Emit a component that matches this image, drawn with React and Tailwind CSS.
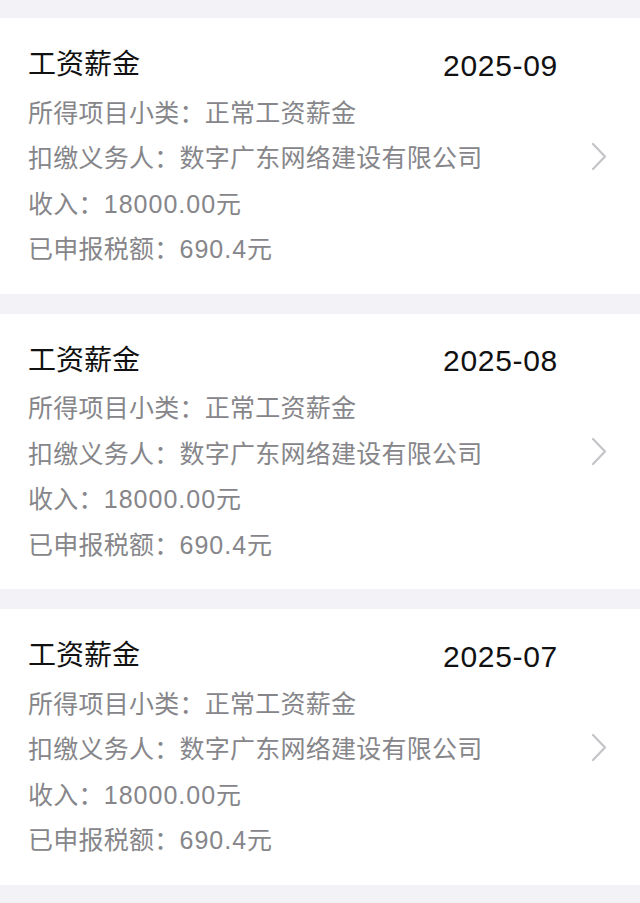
const RECORDS = [
  { month: '2025-09' },
  { month: '2025-08' },
  { month: '2025-07' },
]

const Chevron = () => (
  <svg width="16" height="29" viewBox="0 0 16 29" fill="none" className="shrink-0">
    <path d="M2 2 L14 14.5 L2 27" stroke="#c4c4c8" strokeWidth="2.2" strokeLinecap="round" strokeLinejoin="round" />
  </svg>
)

const Num = ({ children }) => <span className="tracking-[1px]">{children}</span>

const RecordCard = ({ month }) => (
  <div className="bg-white flex items-center pl-[28px] pr-[33px] pt-[22px] pb-[21px]">
    <div className="flex-1 min-w-0 mr-[34px]">
      <div className="flex items-center justify-between h-[50.5px]">
        <span className="text-[28px] text-[#111111]">工资薪金</span>
        <span className="text-[30px] text-[#111111] tracking-[0.7px] -mr-[1px]">{month}</span>
      </div>
      <div className="text-[25px] text-[#86868a] leading-[45.5px] tracking-[0.25px]">
        <p>所得项目小类：正常工资薪金</p>
        <p>扣缴义务人：数字广东网络建设有限公司</p>
        <p>收入：<Num>18000.00</Num>元</p>
        <p>已申报税额：<Num>690.4</Num>元</p>
      </div>
    </div>
    <Chevron />
  </div>
)

export default function App() {
  return (
    <div
      className="min-h-[903px] bg-[#f2f2f7] pt-[18px] flex flex-col gap-[20px]"
      style={{ fontFamily: '"Liberation Sans", "Noto Sans CJK SC", sans-serif' }}
    >
      {RECORDS.map((r) => (
        <RecordCard key={r.month} month={r.month} />
      ))}
    </div>
  )
}
